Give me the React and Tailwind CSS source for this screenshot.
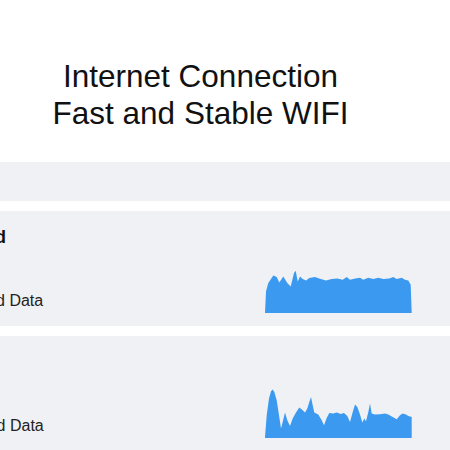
import React from 'react';

const downloadPoints = [
  [0, 50], [1, 28.4], [3.3, 20], [8.3, 12.4], [11.7, 14], [14.3, 19.4], [18.3, 13.4],
  [22.3, 20], [25.7, 23.4], [29, 10], [30.7, 7.7], [32.7, 18.4], [35, 13.4], [37.7, 16],
  [41, 17.4], [44.3, 15], [50, 14], [55, 15.7], [61, 17.4], [66.7, 16], [72.3, 15.4],
  [77.7, 16.7], [81.7, 14], [85, 16.7], [90, 15.4], [95, 14.7], [98.3, 16.7], [103.3, 14.7],
  [108.3, 16], [113.3, 14.7], [118.3, 16], [124.3, 15.4], [128.3, 14], [131.7, 16],
  [136.7, 14.7], [140, 16.7], [143.3, 17.4], [145.7, 21.7], [146.7, 50],
];

const uploadPoints = [
  [0, 49], [1.7, 27.3], [4, 10.6], [6, 3.3], [7.7, 1.6], [9.3, 4], [11.7, 12.3], [14, 27.3],
  [16, 40.6], [17.7, 34], [20, 24.6], [22.3, 32.3], [25, 38], [27.7, 30.6], [31, 24.6],
  [34.3, 19.6], [37.7, 22.3], [40, 24.6], [42.3, 20.6], [44.3, 14], [46, 9], [47.7, 17.3],
  [49.3, 24.6], [53.3, 26.6], [56.7, 32.3], [59, 37.3], [61.7, 30], [64.3, 25], [68.3, 25.6],
  [71.7, 24.6], [75.7, 26], [79, 25], [82.3, 28], [85, 34], [87.3, 25.6], [90, 16.6],
  [92.3, 19], [95, 26.6], [97.3, 34.6], [99.3, 30.6], [101, 33.3], [103.3, 24], [105, 15.6],
  [106.7, 25.6], [110, 26.6], [115, 26.3], [120, 25.6], [123.3, 26.6], [127.7, 29],
  [131.7, 31.3], [135, 27.3], [137.7, 25.6], [141, 26.6], [143.3, 28], [146.7, 29], [146.7, 50],
];

const Sparkline = ({ points }) => {
  const d = 'M0 50 ' + points.map(([x, y]) => `L${x} ${y}`).join(' ') + ' Z';
  return (
    <svg width="147" height="50" viewBox="0 0 147 50" className="block shrink-0 ml-auto mr-[38px]">
      <path d={d} fill="#3b99f0" />
    </svg>
  );
};

const UsagePanel = ({ title, label, points, offset, titleClass }) => (
  <div className="flex items-end bg-[#f0f1f5] pt-3 pb-[13px] h-[115px] overflow-hidden">
    <div className={`flex flex-col whitespace-nowrap ${offset}`}>
      <h2 className={`text-[18px] leading-7 font-bold text-[#111] ${titleClass}`}>{title}</h2>
      <p className="mt-[38px] text-[16px] leading-6 text-[#222]">{label}</p>
    </div>
    <Sparkline points={points} />
  </div>
);

export default function App() {
  return (
    <div className="w-[450px] h-[450px] overflow-hidden bg-white font-['Liberation_Sans',Arial,sans-serif]">
      <div className="pt-[58px]">
        <h1 className="w-[401px] text-center text-[31.5px] leading-[37px] text-[#111]">
          Internet Connection
          <br />
          Fast and Stable WIFI
        </h1>
      </div>

      <div className="mt-[30px] flex flex-col gap-[10px]">
        <div className="h-[39px] bg-[#f0f1f5]" />
        <UsagePanel
          title="Download"
          label="Downloaded Data"
          points={downloadPoints}
          offset="-ml-[84px]"
          titleClass="pl-1"
        />
        <UsagePanel
          title="Upload"
          label="Uploaded Data"
          points={uploadPoints}
          offset="-ml-[63px]"
          titleClass=""
        />
      </div>
    </div>
  );
}
